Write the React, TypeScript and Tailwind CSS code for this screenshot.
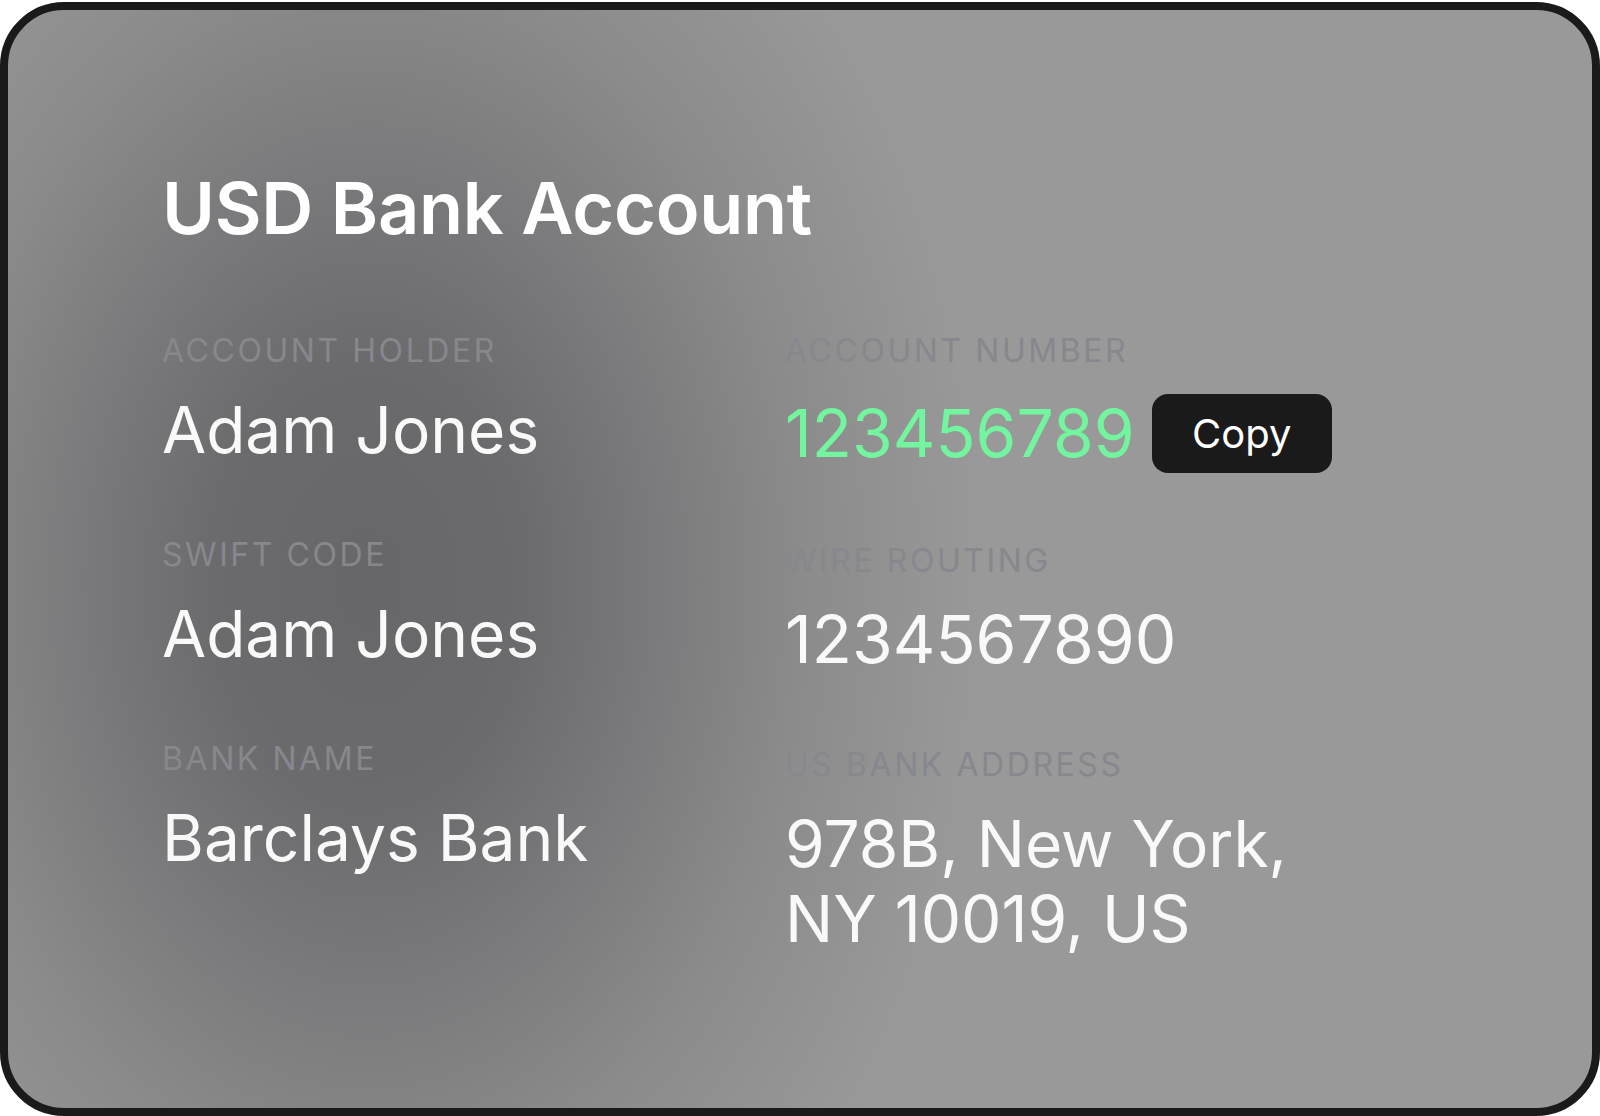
const fields = {
  left: [
    { label: 'Account Holder', value: 'Adam Jones' },
    { label: 'Swift Code', value: 'Adam Jones' },
    { label: 'Bank Name', value: 'Barclays Bank' },
  ],
  right: [
    { label: 'Wire Routing', value: '1234567890', digits: true },
    { label: 'US Bank Address', value: '978B, New York,\nNY 10019, US' },
  ],
};

function Label({ children }: { children: string }) {
  return (
    <p className="text-[32px] leading-[40px] uppercase tracking-[0.08em] text-[#87878e]">
      {children}
    </p>
  );
}

function Value({ children, digits }: { children: string; digits?: boolean }) {
  return (
    <p
      className={`mt-[21px] whitespace-pre-line leading-[75px] text-[#f9f9f9] ${
        digits ? 'text-[66px]' : 'text-[64px]'
      }`}
    >
      {children}
    </p>
  );
}

export default function App() {
  return (
    <div className="min-h-screen bg-white font-['Inter',sans-serif]">
      <div className="mt-[2px] h-[1114px] w-[1600px] overflow-hidden rounded-[64px] border-8 border-[#1a1a1a] bg-[#999999] bg-[radial-gradient(ellipse_700px_1000px_at_360px_570px,#67676a_0%,#6b6b6d_22%,#7b7b7d_42%,#8b8b8b_62%,#999999_88%)] pl-[154px] pt-[162px]">
        <h1 className="text-[72px] leading-none font-semibold tracking-[-0.004em] text-white">
          USD Bank Account
        </h1>

        <div className="mt-[87px] grid grid-cols-[623px_1fr]">
          <div className="flex flex-col gap-[68px]">
            {fields.left.map((f) => (
              <div key={f.label}>
                <Label>{f.label}</Label>
                <Value>{f.value}</Value>
              </div>
            ))}
          </div>

          <div className="flex flex-col gap-[68px]">
            <div>
              <Label>Account Number</Label>
              <div className="mt-[23px] flex items-center gap-[17px]">
                <span className="text-[66px] leading-[75px] text-[#72f59e]">123456789</span>
                <button className="flex h-[79px] w-[180px] items-center justify-center rounded-[16px] bg-[#1a1a1a] text-[40px] text-white">
                  Copy
                </button>
              </div>
            </div>
            {fields.right.map((f) => (
              <div key={f.label}>
                <Label>{f.label}</Label>
                <Value digits={f.digits}>{f.value}</Value>
              </div>
            ))}
          </div>
        </div>
      </div>
    </div>
  );
}
